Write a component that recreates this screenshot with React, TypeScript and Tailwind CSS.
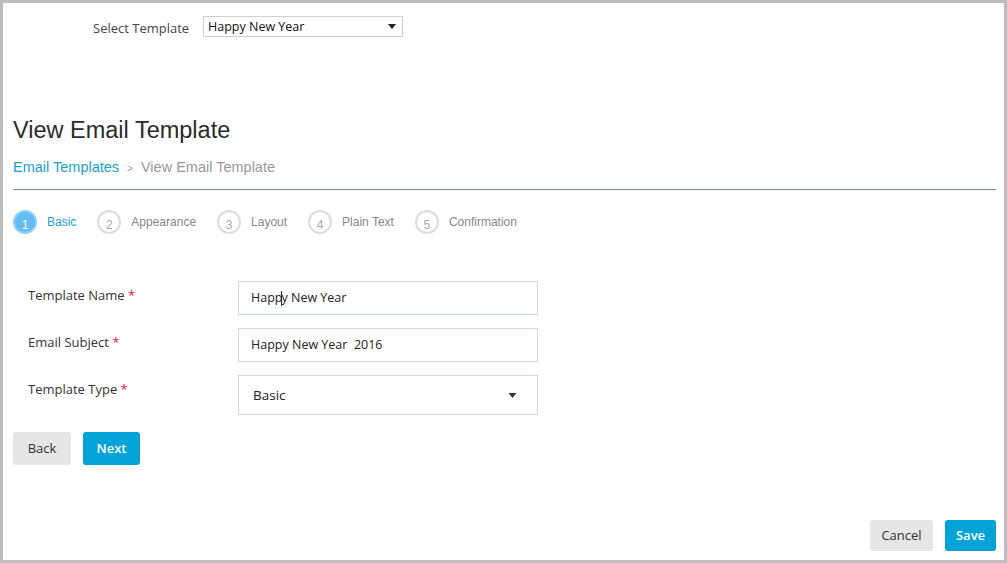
import React from 'react';

const steps = ['Basic', 'Appearance', 'Layout', 'Plain Text', 'Confirmation'];

const Caret = ({ className }: { className: string }) => (
    <svg viewBox="0 0 8 5" className={className}>
        <path d="M0 0h8L4 5z" fill="currentColor" />
    </svg>
);

const FieldLabel = ({ text }: { text: string }) => (
    <div className="w-[210px] pt-[4px] text-[13px] leading-[20px] text-[#333]">
        {text} <span className="text-[#e4222a]">*</span>
    </div>
);

export default function App() {
    return (
        <div
            className="h-[563px] w-[1007px] border-[3px] border-[#bdbdbd] bg-white flex flex-col pl-[10px] pr-[8px] pb-[9px]"
            style={{ fontFamily: '"Open Sans", "Noto Sans", sans-serif' }}
        >
            {/* template picker */}
            <div className="flex items-center mt-[13px] pl-[80px] h-[21px]">
                <span className="text-[13px] text-[#444] w-[110px] pt-[4px]">Select Template</span>
                <div className="flex items-center justify-between w-[200px] h-[21px] border border-[#cfcfcf] pl-[4px] pr-[6px]">
                    <span className="text-[12.5px] text-[#111] pt-[2px]">Happy New Year</span>
                    <Caret className="w-[8px] h-[5px] text-[#222]" />
                </div>
            </div>

            {/* header */}
            <div style={{ fontFamily: '"Liberation Sans", Arial, sans-serif' }}>
                <h1 className="mt-[79px] text-[23.5px] leading-[28px] text-[#2b2b2b]">View Email Template</h1>
                <div className="mt-[15px] flex items-center h-[18px] text-[14.5px]">
                    <span className="text-[#1a9fd6]">Email Templates</span>
                    <span className="text-[10px] text-[#999] mx-[8px]">&gt;</span>
                    <span className="text-[#999]">View Email Template</span>
                </div>
                <div className="mt-[12px] h-px bg-[#6f8a9c]" />

                {/* wizard steps */}
                <div className="mt-[20px] flex items-center gap-[21px] h-[24px]">
                    {steps.map((s, i) => (
                        <div key={s} className="flex items-center gap-[10px]">
                            {i === 0 ? (
                                <div className="w-[24px] h-[24px] rounded-full bg-[#63bcf4] border-2 border-[#8ad0f8] flex justify-center pt-[4px] text-[12px] text-white">
                                    {i + 1}
                                </div>
                            ) : (
                                <div className="w-[24px] h-[24px] rounded-full bg-white border-2 border-[#dcdcdc] flex justify-center pt-[4px] text-[12px] text-[#aaa]">
                                    {i + 1}
                                </div>
                            )}
                            <span className={i === 0 ? 'text-[12px] text-[#1a9fd6]' : 'text-[12px] text-[#888]'}>{s}</span>
                        </div>
                    ))}
                </div>
            </div>

            {/* form */}
            <div className="mt-[47px] pl-[15px] flex flex-col">
                <div className="flex">
                    <FieldLabel text="Template Name" />
                    <div className="w-[300px] h-[34px] border border-[#cfd6de] flex items-center pl-[12px] pt-px text-[12.5px] text-[#222]">
                        Happ<span className="inline-block w-px h-[15px] bg-[#222] -mx-px" />y New Year
                    </div>
                </div>
                <div className="flex mt-[13px]">
                    <FieldLabel text="Email Subject" />
                    <div className="w-[300px] h-[34px] border border-[#cfd6de] flex items-center pl-[12px] pt-px text-[12.5px] text-[#222] whitespace-pre">
                        Happy New Year  2016
                    </div>
                </div>
                <div className="flex mt-[13px]">
                    <FieldLabel text="Template Type" />
                    <div className="w-[300px] h-[40px] border border-[#cfd6de] flex items-center justify-between pl-[14px] pr-[20px] text-[13.5px] text-[#222]">
                        <span>Basic</span>
                        <Caret className="w-[9px] h-[5px] text-[#333]" />
                    </div>
                </div>
            </div>

            <div className="mt-[17px] flex gap-[12px]">
                <button className="w-[58px] h-[33px] rounded-[3px] bg-[#e6e6e6] text-[13px] text-[#333]">Back</button>
                <button className="w-[57px] h-[33px] rounded-[3px] bg-[#03a3d9] text-[13px] font-semibold text-white">Next</button>
            </div>

            <div className="mt-auto flex justify-end gap-[12px]">
                <button className="w-[63px] h-[31px] rounded-[3px] bg-[#e6e6e6] text-[13px] text-[#333]">Cancel</button>
                <button className="w-[51px] h-[31px] rounded-[3px] bg-[#03a3d9] text-[13px] font-semibold text-white">Save</button>
            </div>
        </div>
    );
}
